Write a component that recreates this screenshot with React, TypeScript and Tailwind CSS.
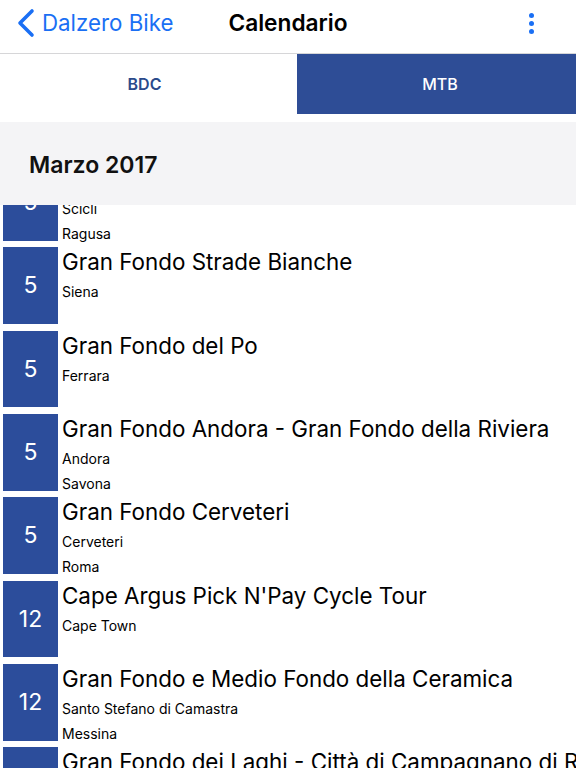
interface Race {
  day: number
  title: string
  places: string[]
}

const races: Race[] = [
  { day: 5, title: 'Granfondo Ibla', places: ['Scicli', 'Ragusa'] },
  { day: 5, title: 'Gran Fondo Strade Bianche', places: ['Siena'] },
  { day: 5, title: 'Gran Fondo del Po', places: ['Ferrara'] },
  { day: 5, title: 'Gran Fondo Andora - Gran Fondo della Riviera', places: ['Andora', 'Savona'] },
  { day: 5, title: 'Gran Fondo Cerveteri', places: ['Cerveteri', 'Roma'] },
  { day: 12, title: "Cape Argus Pick N'Pay Cycle Tour", places: ['Cape Town'] },
  { day: 12, title: 'Gran Fondo e Medio Fondo della Ceramica', places: ['Santo Stefano di Camastra', 'Messina'] },
  { day: 12, title: 'Gran Fondo dei Laghi - Città di Campagnano di Roma', places: ['Campagnano di Roma', 'Roma'] },
]

function RaceRow({ race }: { race: Race }) {
  return (
    <div className="flex h-[83.33px] py-[3.3px] pl-[3px]">
      <div className="flex h-[76.7px] w-[55px] shrink-0 items-center justify-center bg-[#2c4d9b] text-[23px] text-white">
        {race.day}
      </div>
      <div className="min-w-0 flex-1 pl-[4px]">
        <p className="overflow-hidden whitespace-nowrap pt-[1px] text-[22.4px] leading-[28px] text-black">{race.title}</p>
        <div className="mt-[3px]">
          {race.places.map((place) => (
            <p key={place} className="text-[14px] leading-[25px] text-black">
              {place}
            </p>
          ))}
        </div>
      </div>
    </div>
  )
}

export default function App() {
  return (
    <div className="flex h-[768px] w-[576px] flex-col overflow-hidden bg-white font-['Inter',sans-serif]">
      <header className="grid h-[54px] shrink-0 grid-cols-[1fr_auto_1fr] items-center border-b border-[#d6d6d8] pb-[7px]">
        <div className="flex items-center pl-[16px] text-[#1a6ff4]">
          <svg width="20" height="30" viewBox="0 0 20 30" fill="none" stroke="currentColor" strokeWidth="3.6" strokeLinecap="round" strokeLinejoin="round">
            <polyline points="16,3 4,15 16,27" />
          </svg>
          <span className="ml-[6px] text-[22.3px]">Dalzero Bike</span>
        </div>
        <h1 className="text-[22.7px] font-semibold text-black">Calendario</h1>
        <div className="flex justify-end pr-[42px]">
          <div className="flex flex-col gap-[3px]">
            <span className="h-[5px] w-[5px] rounded-full bg-[#1a6ff4]" />
            <span className="h-[5px] w-[5px] rounded-full bg-[#1a6ff4]" />
            <span className="h-[5px] w-[5px] rounded-full bg-[#1a6ff4]" />
          </div>
        </div>
      </header>

      <nav className="flex h-[60px] shrink-0">
        <button className="flex-1 bg-white pr-[8px] text-[16px] font-semibold text-[#2b4a8b]">BDC</button>
        <button className="w-[279px] bg-[#2e4d96] pl-[7px] text-[16px] font-medium text-white">MTB</button>
      </nav>

      <div className="h-[8px] shrink-0" />

      <div className="flex h-[83px] shrink-0 items-center bg-[#f4f4f6] pl-[29px] pt-[4px]">
        <h2 className="text-[23px] font-semibold text-[#111]">Marzo 2017</h2>
      </div>

      <div className="flex-1 overflow-hidden">
        <div className="-mt-[44.3px]">
          {races.map((race, i) => (
            <RaceRow key={i} race={race} />
          ))}
        </div>
      </div>
    </div>
  )
}
